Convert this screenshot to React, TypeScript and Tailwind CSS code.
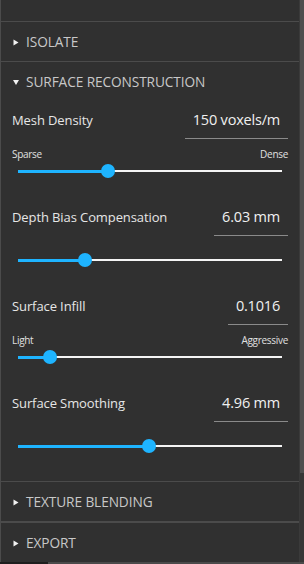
import React from "react";

type Param = {
  label: string;
  value: string;
  pct: number;
  min?: string;
  max?: string;
};

const PARAMS: Param[] = [
  { label: "Mesh Density", value: "150 voxels/m", pct: 34, min: "Sparse", max: "Dense" },
  { label: "Depth Bias Compensation", value: "6.03 mm", pct: 25.4 },
  { label: "Surface Infill", value: "0.1016", pct: 12.1, min: "Light", max: "Aggressive" },
  { label: "Surface Smoothing", value: "4.96 mm", pct: 49.6 },
];

function Arrow({ open }: { open?: boolean }) {
  return (
    <svg width="6" height="7" viewBox="0 0 6 7" className="shrink-0">
      {open ? (
        <polygon points="0,1 6,1 3,6" fill="#f2f2f2" />
      ) : (
        <polygon points="0.5,0.5 5.5,3.5 0.5,6.5" fill="#f2f2f2" />
      )}
    </svg>
  );
}

function SectionHeader({ title, open, thick }: { title: string; open?: boolean; thick?: boolean }) {
  return (
    <div
      className={`flex items-center gap-[7px] pl-[12px] pt-[1px] border-[#4b4b4b] ${
        thick ? "h-[41px] border-t-2" : "h-[40px] border-t"
      }`}
    >
      <Arrow open={open} />
      <span className="text-[13.7px] text-[#c8c8c8] tracking-[-0.1px]">{title}</span>
    </div>
  );
}

function Slider({ pct }: { pct: number }) {
  return (
    <div className="relative h-[20px] mx-[6px]">
      <div className="absolute left-0 right-0 top-[9px] h-[2px] bg-white/95" />
      <div className="absolute left-0 top-[8.5px] h-[3px] bg-[#1eb4ff]" style={{ width: `${pct}%` }} />
      <div
        className="absolute top-[3px] w-[14px] h-[14px] -ml-[7px] rounded-full bg-[#1eb4ff]"
        style={{ left: `${pct}%` }}
      />
    </div>
  );
}

function ParamBlock({ p }: { p: Param }) {
  return (
    <div className="pb-[17px]">
      <div className="flex items-baseline justify-between pt-[9px]">
        <span className="text-[13px] text-[#e6e6e6] tracking-[-0.1px]">{p.label}</span>
        <span className="px-[8px] pb-[8px] border-b border-[#8a8a8a] text-[14.5px] leading-[20px] text-[#f0f0f0] tracking-[-0.2px]">
          {p.value}
        </span>
      </div>
      {p.min ? (
        <div className="flex items-end justify-between h-[22px] text-[10px] leading-[14px] text-[#e0e0e0] tracking-[-0.3px]">
          <span>{p.min}</span>
          <span>{p.max}</span>
        </div>
      ) : (
        <div className="h-[14px]" />
      )}
      <Slider pct={p.pct} />
    </div>
  );
}

export default function App() {
  return (
    <div className="w-[304px] h-[564px] bg-[#303030] flex flex-col overflow-hidden font-['Open_Sans','Noto_Sans',sans-serif]">
      <div className="flex flex-1 min-h-0">
        <div className="w-[299px] border-l border-[#4b4b4b] flex flex-col">
          <div className="h-[21px]" />
          <SectionHeader title="ISOLATE" />
          <SectionHeader title="SURFACE RECONSTRUCTION" open />
          <div className="px-[11px] pb-[8px]">
            {PARAMS.map((p) => (
              <ParamBlock key={p.label} p={p} />
            ))}
          </div>
          <SectionHeader title="TEXTURE BLENDING" />
          <SectionHeader title="EXPORT" thick />
        </div>
        <div className="w-[5px] flex flex-col border-l border-[#3a3a3a]">
          <div className="h-[473px] bg-[#4e4e4e]" />
          <div className="flex-1 bg-[#363636]" />
        </div>
      </div>
      <div className="h-[2px] flex">
        <div className="w-[48px] bg-[#1e1e1e]" />
        <div className="flex-1 bg-[#4a4a4a]" />
      </div>
    </div>
  );
}
